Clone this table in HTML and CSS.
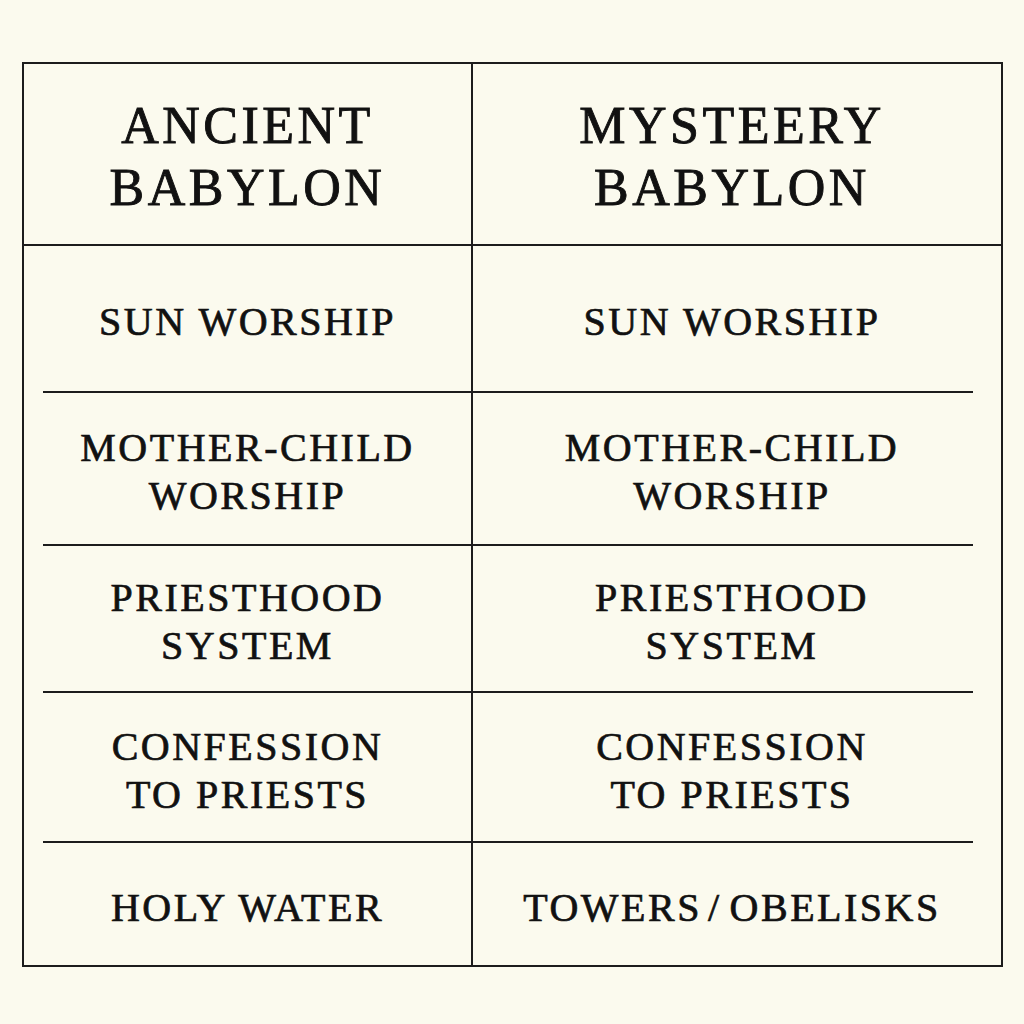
FILE: index.html
```html
<!DOCTYPE html>
<html lang="en">
<head>
<meta charset="utf-8">
<title>Ancient Babylon vs Mystery Babylon</title>
<link rel="stylesheet" href="styles.css">
</head>
<body>
<div class="page">
  <div class="table">
    <div class="row head">
      <div class="cell left">ANCIENT<br>BABYLON</div>
      <div class="cell right">MYSTEERY<br>BABYLON</div>
    </div>
    <div class="row r1">
      <div class="cell left">SUN WORSHIP</div>
      <div class="cell right">SUN WORSHIP</div>
    </div>
    <div class="rule"></div>
    <div class="row r2">
      <div class="cell left">MOTHER-CHILD<br>WORSHIP</div>
      <div class="cell right">MOTHER-CHILD<br>WORSHIP</div>
    </div>
    <div class="rule"></div>
    <div class="row r3">
      <div class="cell left">PRIESTHOOD<br>SYSTEM</div>
      <div class="cell right">PRIESTHOOD<br>SYSTEM</div>
    </div>
    <div class="rule"></div>
    <div class="row r4">
      <div class="cell left">CONFESSION<br>TO PRIESTS</div>
      <div class="cell right">CONFESSION<br>TO PRIESTS</div>
    </div>
    <div class="rule"></div>
    <div class="row r5">
      <div class="cell left">HOLY WATER</div>
      <div class="cell right">TOWERS<span class="slash">/</span>OBELISKS</div>
    </div>
  </div>
</div>
</body>
</html>
```
FILE: styles.css
```css
html, body {
  margin: 0;
  padding: 0;
  background: #fbfaee;
}

.page {
  width: 1024px;
  height: 1024px;
  padding: 62px 0 0 22px;
  box-sizing: border-box;
  font-family: "Liberation Serif", "Times New Roman", serif;
  color: #111111;
}

.table {
  width: 981px;
  box-sizing: border-box;
  border: 2px solid #1c1c1c;
  background: linear-gradient(to right,
    transparent 447px, #1c1c1c 447px, #1c1c1c 449px, transparent 449px);
}

.row {
  display: grid;
  grid-template-columns: 447px 1fr;
  column-gap: 2px;
}

.cell {
  display: flex;
  align-items: center;
  justify-content: center;
  text-align: center;
  font-size: 40px;
  line-height: 48px;
  letter-spacing: 2.5px;
  padding-top: 7px;
  box-sizing: border-box;
  -webkit-text-stroke: 0.7px #111111;
}

.cell.right {
  padding-right: 10px;
}

.slash {
  margin: 0 8px 0 6px;
}

.head {
  height: 180px;
  border-bottom: 2px solid #1c1c1c;
}

.head .cell {
  font-size: 52px;
  line-height: 62px;
  letter-spacing: 3.5px;
  padding-top: 6px;
  -webkit-text-stroke: 0.9px #111111;
}

.r1 { height: 145px; }
.r2 { height: 151px; }
.r3 { height: 145px; }
.r4 { height: 148px; }
.r5 { height: 122px; }

.rule {
  height: 2px;
  margin: 0 28px 0 19px;
  background: #1c1c1c;
}
```
